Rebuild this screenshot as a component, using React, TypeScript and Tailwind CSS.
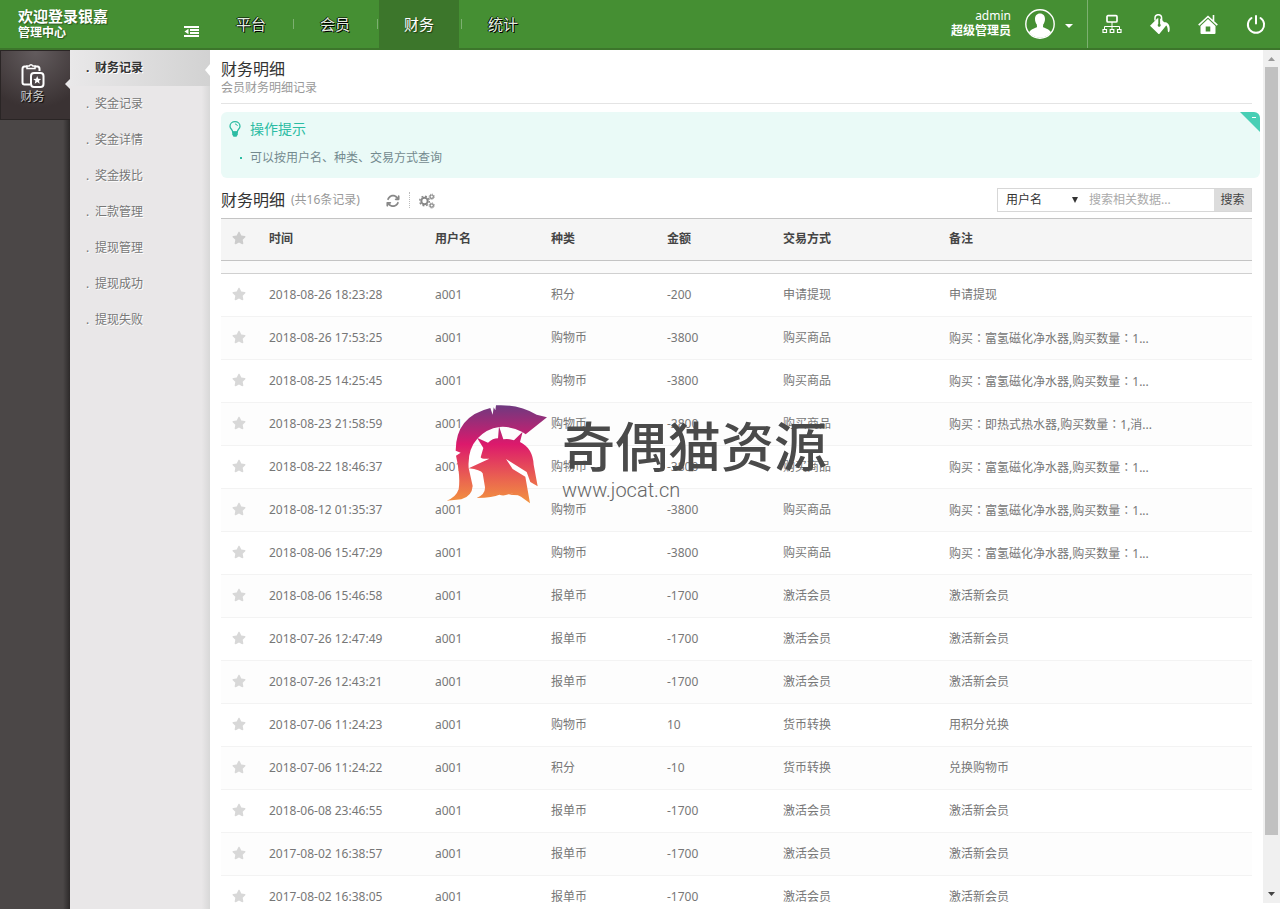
import React from 'react';
import { FaStar } from 'react-icons/fa';
import { FaArrowsRotate } from 'react-icons/fa6';

const sections = ['平台', '会员', '财务', '统计'];
const menu = ['财务记录', '奖金记录', '奖金详情', '奖金拨比', '汇款管理', '提现管理', '提现成功', '提现失败'];
const PURIFIER = '购买：富氢磁化净水器,购买数量：1...';
const rows: string[][] = [
  ['2018-08-26 18:23:28', 'a001', '积分', '-200', '申请提现', '申请提现'],
  ['2018-08-26 17:53:25', 'a001', '购物币', '-3800', '购买商品', PURIFIER],
  ['2018-08-25 14:25:45', 'a001', '购物币', '-3800', '购买商品', PURIFIER],
  ['2018-08-23 21:58:59', 'a001', '购物币', '-2800', '购买商品', '购买：即热式热水器,购买数量：1,消...'],
  ['2018-08-22 18:46:37', 'a001', '购物币', '-3800', '购买商品', PURIFIER],
  ['2018-08-12 01:35:37', 'a001', '购物币', '-3800', '购买商品', PURIFIER],
  ['2018-08-06 15:47:29', 'a001', '购物币', '-3800', '购买商品', PURIFIER],
  ['2018-08-06 15:46:58', 'a001', '报单币', '-1700', '激活会员', '激活新会员'],
  ['2018-07-26 12:47:49', 'a001', '报单币', '-1700', '激活会员', '激活新会员'],
  ['2018-07-26 12:43:21', 'a001', '报单币', '-1700', '激活会员', '激活新会员'],
  ['2018-07-06 11:24:23', 'a001', '购物币', '10', '货币转换', '用积分兑换'],
  ['2018-07-06 11:24:22', 'a001', '积分', '-10', '货币转换', '兑换购物币'],
  ['2018-06-08 23:46:55', 'a001', '报单币', '-1700', '激活会员', '激活新会员'],
  ['2017-08-02 16:38:57', 'a001', '报单币', '-1700', '激活会员', '激活新会员'],
  ['2017-08-02 16:38:05', 'a001', '报单币', '-1700', '激活会员', '激活新会员'],
];

function Avatar() {
  return (
    <svg viewBox="0 0 30 30" className="size-[30px]" aria-hidden="true">
      <circle cx="15" cy="15" r="14.2" fill="#458f33" stroke="#fff" strokeWidth="1.4" />
      <path d="M15 4.500c3.200 0 5 2.300 5 5.500 0 2.300-.8 4.200-1.800 5.500l-.2 2.500c1.500 1.300 5.500 1.500 8 5.200A13.500 13.500 0 0 1 4 23.200c2.500-3.700 6.500-3.900 8-5.200l-.2-2.500C10.800 14.200 10 12.300 10 10c0-3.200 1.800-5.500 5-5.500z" fill="#fff" />
    </svg>
  );
}

function SitemapIcon() {
  return (
    <svg viewBox="0 0 20 20" className="size-5" fill="none" stroke="#fff" aria-hidden="true">
      <rect x="5" y="1.700" width="10" height="6.300" rx="1" strokeWidth="1.700" />
      <path d="M10 8v7M2.500 15v-2.500h15V15" strokeWidth="1" />
      <path d="M1 15.500h3.500v3H1zM8.200 15.500h3.600v3H8.200zM15.500 15.500H19v3h-3.500z" strokeWidth="1.200" />
    </svg>
  );
}

function BucketIcon() {
  return (
    <svg viewBox="0 0 20 20" className="size-5" aria-hidden="true">
      <path d="M0 11.800 7 4.700 8.300 4V10a1.500 1.500 0 1 0 1.800 0V4.200L16.800 10.800 9.300 20 8.500 20z" fill="#fff" />
      <path d="M5 6.500V4A3.300 3.300 0 0 1 11.600 4v5" fill="none" stroke="#fff" strokeWidth="1.500" />
      <path d="M14 8c4 .2 5.700 3 5.700 6.500 0 2-.2 3.300-1 3.700-.9-.2-1-1.200-1-2.700-.1-1.800-.6-3.500-2-4.500z" fill="#fff" />
    </svg>
  );
}

function HomeIcon() {
  return (
    <svg viewBox="0 0 20 20" className="size-5" aria-hidden="true">
      <path d="M.7 11.200 10 2.500l9.300 8.700M15.500 7V1" fill="none" stroke="#fff" strokeWidth="1.600" />
      <path d="M10 5 17.500 12v7q0 1-1 1h-13q-1 0-1-1v-7zM7.700 12.500v5h4.600v-5z" fill="#fff" fillRule="evenodd" />
    </svg>
  );
}

function PowerIcon() {
  return (
    <svg viewBox="0 0 20 20" className="size-5" fill="none" stroke="#fff" strokeWidth="2" strokeLinecap="round" aria-hidden="true">
      <path d="M5.500 4a8.100 8.100 0 1 0 9 0M10 2v7.500" />
    </svg>
  );
}

function FinanceIcon() {
  return (
    <svg viewBox="0 0 24 26" className="h-[26px] w-6" fill="none" stroke="#fff" strokeWidth="2" aria-hidden="true">
      <path d="M9 21.500H3.500Q1.500 21.500 1.500 19.500V6q0-2.500 2-2.500H6M14 3.500h2.500q2 0 2 2.500V8" />
      <path d="M6 5.500V3h2.200a2 2 0 0 1 3.600 0H14v2.500z" strokeWidth="1.500" />
      <rect x="10" y="10" width="12.500" height="14" rx="3" />
      <path d="m16.200 13 1.100 2.700 2.900.2-2.200 1.900.7 2.900-2.500-1.600-2.500 1.600.7-2.900-2.200-1.900 2.900-.2z" fill="#fff" stroke="none" />
    </svg>
  );
}

function BulbIcon() {
  return (
    <svg viewBox="0 0 12 16" className="h-4 w-3" fill="none" stroke="#2cbca3" aria-hidden="true">
      <path d="M3.700 11C3.700 8.500 1 8 1 5.200a5 4.500 0 0 1 10 0C11 8 8.300 8.500 8.300 11z" strokeWidth="1.300" />
      <path d="M6 3c1.500 0 2.300.8 2.300 2" strokeWidth="1" />
      <path d="M3.200 10.500h5.600v3L7.500 15.700h-3L3.200 13.500z" fill="#2cbca3" stroke="none" />
    </svg>
  );
}

function GearsIcon() {
  return (
    <svg viewBox="0 0 16 16" className="size-4" fill="none" stroke="#888" aria-hidden="true">
      <circle cx="5.500" cy="8" r="3.200" strokeWidth="2" />
      <circle cx="5.500" cy="8" r="4.800" strokeWidth="1.400" strokeDasharray="1.900 1.870" />
      <circle cx="12.700" cy="3.700" r="1.700" strokeWidth="1.200" />
      <circle cx="12.700" cy="3.700" r="2.600" strokeWidth=".9" strokeDasharray="1.100 .94" />
      <circle cx="12.700" cy="12.500" r="1.700" strokeWidth="1.200" />
      <circle cx="12.700" cy="12.500" r="2.600" strokeWidth=".9" strokeDasharray="1.100 .94" />
    </svg>
  );
}

function Helmet() {
  return (
    <svg viewBox="0 0 348 336" className="h-28 w-[116px]" aria-hidden="true">
      <defs>
        <linearGradient id="helmet" gradientUnits="userSpaceOnUse" x1="0" y1="20" x2="0" y2="316">
          <stop offset="0" stopColor="#6d3a80" />
          <stop offset=".4" stopColor="#dc196c" />
          <stop offset=".75" stopColor="#ea6350" />
          <stop offset="1" stopColor="#f2943f" />
        </linearGradient>
      </defs>
      <g fill="url(#helmet)">
        <path d="M168 22Q235 18 290 50L321 58 257 109 247 102Q215 84 178 87 140 92 113 121 82 155 86 210L98 264Q96 295 64 304L20 308Q48 298 56 274 62 235 48 173L62 164 47 158Q47 55 151 30L158 50 161 28 166 37z" />
        <path d="M111 119 144 134Q158 121 174 121L177 85 190 124Q205 121 222 127L248 101 240 132Q278 150 281 200L293 265 271 252 260 222 198 183 218 213 256 236 270 316 243 296Q225 284 206 289 190 295 178 290 160 298 110 300 140 288 134 262L128 226Q122 215 86 211L148 182Q125 184 122 178L130 150z" />
        <path d="M206 290Q228 288 233 264L236 292z" />
      </g>
    </svg>
  );
}

/* The regional face centres full-width colons in their cell. */
function CellText({ text }: { text: string }) {
  return (
    <>
      {text.split('：').map((part, i) => (
        <React.Fragment key={i}>
          {i > 0 && <span lang="zh-TW" className="font-['Noto_Sans_CJK_TC',sans-serif]">：</span>}
          {part}
        </React.Fragment>
      ))}
    </>
  );
}

export default function App() {
  return (
    <div className="flex h-screen flex-col overflow-hidden bg-white font-['Noto_Sans','Noto_Sans_CJK_SC',sans-serif] text-xs text-[#777]">
      <header className="flex h-[50px] shrink-0 border-b-2 border-[#3c762b] bg-[#458f33] text-white">
        <div className="flex w-[211px] shrink-0 justify-between pr-3 pl-[18px] font-bold text-shadow-[1px_1px_1px_#0006]">
          <div className="pt-[7px]">
            <h1 className="text-[15px] leading-[18px]">欢迎登录银嘉</h1>
            <p className="leading-4">管理中心</p>
          </div>
          <button aria-label="收起菜单" className="mt-[25px] h-3">
            <svg viewBox="0 0 15 12" className="h-3 w-[15px]" fill="none" stroke="#fff" strokeWidth="2" aria-hidden="true">
              <path d="M0 2h15M6 5h9M6 8h9M0 11h15" />
              <path d="M4.500 3.800v5.400L.5 6.500z" fill="#fff" stroke="none" />
            </svg>
          </button>
        </div>
        <nav className="flex items-center text-[15px]">
          {sections.map((name, i) => (
            <React.Fragment key={name}>
              {i > 0 && <span className="mr-px ml-0.5 h-2.5 w-px bg-[#7db071]" />}
              <a
                href="#"
                className={
                  name === '财务'
                    ? 'flex h-12 w-20 items-center justify-center bg-[#3c762b] text-shadow-[1px_1px_1px_#0008]'
                    : 'flex h-12 w-20 items-center justify-center text-[#e4efe1] text-shadow-[1px_1px_0_#000,-1px_0_0_#000,0_-1px_0_#0008]'
                }
              >
                {name}
              </a>
            </React.Fragment>
          ))}
        </nav>
        <div className="ml-auto flex items-center">
          <div className="mr-3.5 pb-0.5 text-right leading-[15px]">
            <p>admin</p>
            <p className="font-bold">超级管理员</p>
          </div>
          <Avatar />
          <button aria-label="账户菜单" className="mt-1 mr-3.5 ml-2.5">
            <svg viewBox="0 0 8 4" className="h-1 w-2" aria-hidden="true">
              <path d="M0 0h8L4 4z" fill="#fff" />
            </svg>
          </button>
          <div className="flex h-12 border-l border-[#7db071]">
            <a href="#" aria-label="站点地图" className="grid w-12 place-items-center"><SitemapIcon /></a>
            <a href="#" aria-label="主题" className="grid w-12 place-items-center"><BucketIcon /></a>
            <a href="#" aria-label="首页" className="grid w-12 place-items-center"><HomeIcon /></a>
            <a href="#" aria-label="退出" className="grid w-12 place-items-center"><PowerIcon /></a>
          </div>
        </div>
      </header>

      <div className="flex min-h-0 flex-1">
        <aside className="w-[70px] shrink-0 bg-[linear-gradient(90deg,#4b4747_90%,#2c2929)]">
          <a
            href="#"
            className="relative flex h-[70px] flex-col items-center border border-r-0 border-[#2a2525] bg-[radial-gradient(circle_at_50%_0,#635c5e,#3a3233_75%)] pt-3 pr-1.5 text-[#ccc] text-shadow-[1px_1px_1px_#000]"
          >
            <FinanceIcon />
            <span className="leading-4">财务</span>
            <svg viewBox="0 0 5 10" className="absolute top-7 right-0 h-2.5 w-[5px]" aria-hidden="true">
              <path d="M5 0v10L0 5z" fill="#e9e8e9" />
            </svg>
          </a>
        </aside>

        <nav className="w-[140px] shrink-0 bg-[linear-gradient(90deg,#e9e7e8_94%,#d8d8d8)]">
          {menu.map((item, i) => (
            <a
              key={item}
              href="#"
              className={
                i === 0
                  ? 'relative flex h-9 items-center bg-linear-to-r from-[#e9e8e9] to-[#d2d2d2] pl-4 font-bold text-[#333] text-shadow-[1px_1px_0_#fff]'
                  : 'flex h-9 items-center pl-4 text-shadow-[1px_1px_0_#fff]'
              }
            >
              <span className="w-[9px]">.</span>
              {item}
              {i === 0 && (
                <svg viewBox="0 0 5 12" className="absolute top-3.5 right-0 h-3 w-[5px]" aria-hidden="true">
                  <path d="M5 0v12L0 6z" fill="#fff" />
                </svg>
              )}
            </a>
          ))}
        </nav>

        <main className="min-w-0 flex-1 overflow-hidden pr-[3px] pl-[11px]">
          <div className="mr-2 h-[54px] border-b border-[#e4e4e4] pt-2">
            <h2 className="text-base leading-[22px] text-[#333]">财务明细</h2>
            <p className="leading-4 text-[#999]">会员财务明细记录</p>
          </div>

          <section className="relative mt-2 h-[66px] overflow-hidden rounded-md bg-[#eafaf7] pl-2">
            <h3 className="flex h-[34px] items-center gap-[9px] text-sm text-[#2cbca3]">
              <BulbIcon />
              操作提示
            </h3>
            <ul>
              <li className="flex items-center pl-[11px] leading-6 text-[#748a8f]">
                <span className="mr-2 size-0.5 bg-[#2cbca3]" />
                可以按用户名、种类、交易方式查询
              </li>
            </ul>
            <button aria-label="收起提示" className="absolute top-0 right-0">
              <svg viewBox="0 0 20 20" className="size-5" aria-hidden="true">
                <path d="M0 0h20v20z" fill="#48cfb5" />
                <path d="M12 5.500h4" stroke="#fff" />
              </svg>
            </button>
          </section>

          <div className="mr-2 flex h-10 items-center pt-1">
            <h3 className="text-base text-[#333]">财务明细</h3>
            <span className="ml-1.5 text-[#999]">(共16条记录)</span>
            <button aria-label="刷新" className="ml-[26px] pt-0.5"><FaArrowsRotate className="size-3.5 text-[#888]" /></button>
            <span className="mx-[9px] h-4 border-l border-dotted border-[#bbb]" />
            <button aria-label="设置" className="pt-0.5"><GearsIcon /></button>
            <form className="ml-auto flex h-6 border border-[#d7d7d7]">
              <div className="relative flex">
                <select aria-label="搜索字段" className="w-[91px] appearance-none pl-2 text-[#333]">
                  <option>用户名</option>
                </select>
                <svg viewBox="0 0 6 6" className="pointer-events-none absolute top-2 right-[11px] size-1.5" aria-hidden="true">
                  <path d="M0 0h6L3 6z" fill="#333" />
                </svg>
              </div>
              <input aria-label="搜索" placeholder="搜索相关数据..." className="w-[125px] outline-none placeholder:text-[#aaa]" />
              <button type="button" className="w-[37px] bg-[#dcdcdc] text-[#444]">搜索</button>
            </form>
          </div>

          <div className="mr-2">
            <table className="w-full table-fixed border-separate border-spacing-0 text-left">
              <colgroup>
                <col className="w-10" />
                <col className="w-[166px]" />
                <col className="w-[116px]" />
                <col className="w-[116px]" />
                <col className="w-[116px]" />
                <col className="w-[166px]" />
                <col />
              </colgroup>
              <thead>
                <tr className="h-[43px] bg-[#f5f5f5] text-[#444]">
                  <th className="border-y border-[#c4c4c4] p-0 pb-1 pl-[11px]"><FaStar className="size-3.5 text-[#ccc]" /></th>
                  {['时间', '用户名', '种类', '金额', '交易方式', '备注'].map((label) => (
                    <th key={label} className="border-y border-[#c4c4c4] px-2 pt-0 pb-0.5">{label}</th>
                  ))}
                </tr>
              </thead>
              <tbody>
                <tr className="h-[13px] bg-[#fafafa]">
                  <td colSpan={7} className="border-b border-[#d0d0d0] p-0" />
                </tr>
                {rows.map((row) => (
                  <tr key={row[0]} className="h-[43px] odd:bg-[#fdfdfd]">
                    <td className="border-b border-[#f3f3f3] p-0 pb-0.5 pl-[11px]"><FaStar className="size-3.5 text-[#d8d8d8]" /></td>
                    {row.map((cell, c) => (
                      <td key={c} className="border-b border-[#f3f3f3] px-2 py-0 whitespace-nowrap"><CellText text={cell} /></td>
                    ))}
                  </tr>
                ))}
              </tbody>
            </table>
          </div>
        </main>

        <div className="mb-1.5 flex w-[17px] shrink-0 flex-col items-center bg-[#f0f0f0]">
          <svg viewBox="0 0 17 17" className="size-[17px] shrink-0" aria-hidden="true"><path d="M5 11h7L8.500 7z" fill="#999" /></svg>
          <div className="h-[90%] w-[13px] bg-[#c1c1c1]" />
          <div className="flex-1" />
          <svg viewBox="0 0 17 17" className="size-[17px] shrink-0" aria-hidden="true"><path d="M5 6h7l-3.500 4z" fill="#444" /></svg>
        </div>
      </div>

      <div className="pointer-events-none absolute top-[398px] left-[440px] flex">
        <Helmet />
        <div className="ml-1.5 pt-4">
          <p className="text-[53px] leading-[66px] font-medium text-[#4a4a4a]">奇偶猫资源</p>
          <p className="font-['Roboto',sans-serif] text-xl leading-5 font-light text-[#666]">www.jocat.cn</p>
        </div>
      </div>
    </div>
  );
}
